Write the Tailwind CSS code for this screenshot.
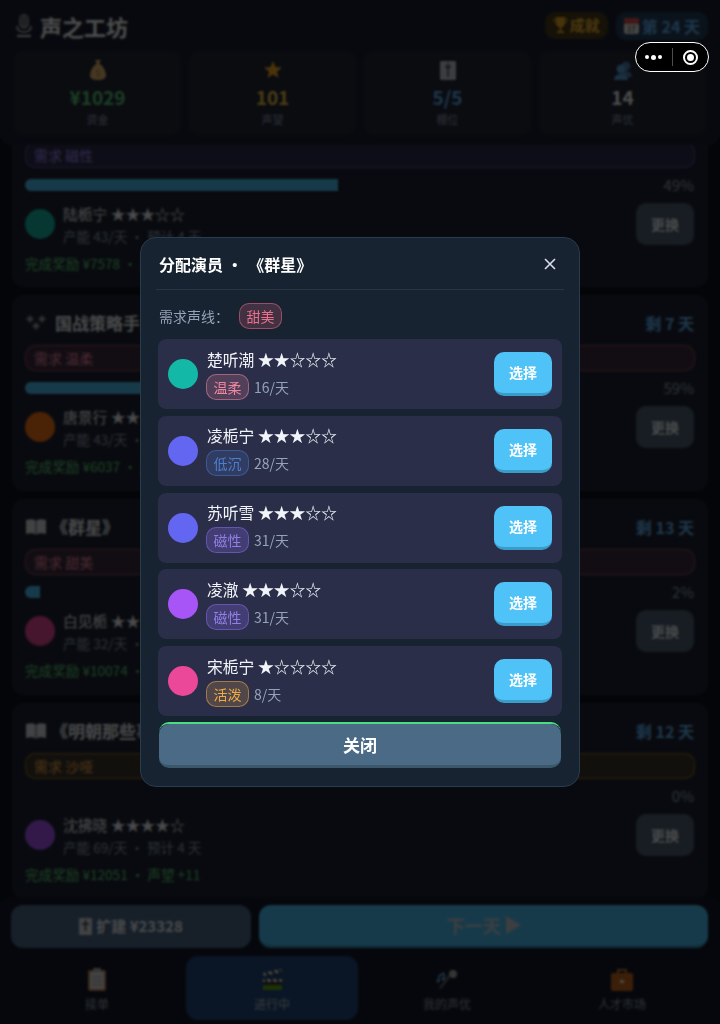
<!DOCTYPE html>
<html lang="zh-CN">
<head>
<meta charset="UTF-8">
<title>声之工坊</title>
<script src="https://cdn.jsdelivr.net/npm/@tailwindcss/browser@4"></script>
</head>
<body class="bg-[#0d1220] font-['Noto_Sans_CJK_SC','Noto_Sans',sans-serif] text-[#f1f5f9]">
<div class="relative w-[720px] h-[1024px] overflow-hidden flex flex-col">

  <!-- Header -->
  <header class="relative z-10 h-[145px] shrink-0 bg-[#1c2132] rounded-b-[12px] px-[14px]">
    <div class="flex items-center justify-between h-[51px]">
      <div class="flex items-center gap-[7px] ml-[1px]">
        <svg width="18" height="24" viewBox="0 0 18 24"><rect x="4" y="0" width="10" height="15" rx="5" fill="#8a8e94"/><path d="M5 4h8M5 7h8M5 10h8M7 1v12M11 1v12" stroke="#50545a" stroke-width="1"/><path d="M2 12c0 4 3 6 7 6s7-2 7-6" fill="none" stroke="#c8ccd0" stroke-width="1.500"/><rect x="2" y="21" width="14" height="2" fill="#c8ccd0"/></svg>
        <span class="text-[22px] font-bold leading-none text-white">声之工坊</span>
      </div>
      <div class="flex items-center gap-2 -mr-[2px]">
        <div class="flex items-center gap-[2px] h-[27px] px-2 rounded-[10px] bg-[#4a3c1c] text-[#f5b82e] text-[15px] font-bold">
          <svg width="15" height="17" viewBox="0 0 15 17"><path d="M3 0h9v6a4.500 4.500 0 0 1-9 0zM6.500 10h2v4h-2zM4 14h7v2H4z" fill="#f0a820"/><path d="M3 2H1c0 3 1 4 3 5M12 2h2c0 3-1 4-3 5" fill="none" stroke="#f0a820"/></svg>
          成就
        </div>
        <div class="flex items-center gap-[3px] h-[28px] px-2 rounded-[10px] bg-[#24405c] text-[#64b5f6] text-[16px] font-bold">
          <svg width="15" height="18" viewBox="0 0 15 18"><rect y="1" width="15" height="16" rx="2" fill="#e8e8e8"/><path d="M0 3a2 2 0 0 1 2-2h11a2 2 0 0 1 2 2v4H0z" fill="#e05050"/><text x="7.500" y="15" font-size="7" text-anchor="middle" fill="#555">17</text></svg>
          第 24 天
        </div>
      </div>
    </div>
    <div class="grid grid-cols-4 gap-2">
      <div class="h-[84px] rounded-[10px] bg-[#222838] flex flex-col items-center pt-[8px]">
        <svg width="18" height="22" viewBox="0 0 18 22"><path d="M6 1h6l-2 4h-2zM7 5h4c4 3 6 8 6 11 0 4-3 5-8 5s-8-1-8-5c0-3 2-8 6-11z" fill="#e8b870"/><text x="9" y="17" font-size="8" text-anchor="middle" fill="#8a6428">$</text></svg>
        <span class="text-[19px] font-bold leading-[26px] mt-[3px] text-[#5fd07a]">¥1029</span>
        <span class="text-[11px] leading-[16px] mt-[1px] text-[#94a3b8]">资金</span>
      </div>
      <div class="h-[84px] rounded-[10px] bg-[#222838] flex flex-col items-center pt-[8px]">
        <svg width="18" height="22" viewBox="0 0 18 22"><path d="M9 2l2.500 6 6.500.500-5 4.200 1.600 6.300L9 15.500 3.400 19 5 12.700 0 8.500 6.500 8z" fill="#f9a825"/></svg>
        <span class="text-[19px] font-bold leading-[26px] mt-[3px] text-[#fbc942]">101</span>
        <span class="text-[11px] leading-[16px] mt-[1px] text-[#94a3b8]">声望</span>
      </div>
      <div class="h-[84px] rounded-[10px] bg-[#222838] flex flex-col items-center pt-[10px]">
        <svg width="16" height="19" viewBox="0 0 16 19"><rect width="16" height="19" rx="1" fill="#c8ced6"/><path d="M8 2v14M5 6h6" stroke="#3a4048" stroke-width="1.500"/></svg>
        <span class="text-[19px] font-bold leading-[26px] mt-[4px] text-[#64b5f6]">5/5</span>
        <span class="text-[11px] leading-[16px] mt-[1px] text-[#94a3b8]">棚位</span>
      </div>
      <div class="h-[84px] rounded-[10px] bg-[#222838] flex flex-col items-center pt-[8px]">
        <svg width="20" height="22" viewBox="0 0 20 22"><circle cx="13" cy="7" r="4.500" fill="#4a80b0"/><path d="M9 18c0-4 1-6 4-6s6 2 6 6z" fill="#4a80b0"/><circle cx="8" cy="10" r="4.500" fill="#5aa0dc"/><path d="M1 21c0-4 3-6 7-6s7 2 7 6z" fill="#5aa0dc"/></svg>
        <span class="text-[19px] font-bold leading-[26px] mt-[3px] text-white">14</span>
        <span class="text-[11px] leading-[16px] mt-[1px] text-[#94a3b8]">声优</span>
      </div>
    </div>
  </header>

  <!-- Project list, scrolled so that the first card sits under the header -->
  <main class="flex-1 -mt-[54px] px-3 flex flex-col gap-2 overflow-hidden">
    <!-- card 1 -->
    <section class="h-[196px] shrink-0 rounded-[12px] bg-[#1e2432] pl-[13px] pr-[14px] pt-[51px]">
      <div class="h-[26px] -mr-px rounded-[10px] border border-[#8b6cf0]/50 bg-[#8b6cf0]/15 px-2 text-[14px] leading-[24px] text-[#a78bfa]">需求 磁性</div>
      <div class="flex items-center mt-[10px] h-[14px]">
        <div class="w-[639px] h-[12px]"><div class="h-full rounded-l-full bg-[#4fc3f7]" style="width:49%"></div></div>
        <span class="ml-auto text-[15px] mt-[1px] text-[#94a3b8]">49%</span>
      </div>
      <div class="flex items-center mt-[11px] h-[42px]">
        <div class="w-[30px] h-[30px] rounded-full bg-[#14b8a6]"></div>
        <div class="ml-2 flex-1 pt-[2px]">
          <div class="text-[14.800px] leading-[22px]">陆栀宁 ★★★☆☆</div>
          <div class="text-[13.600px] leading-[22px] text-[#94a3b8]">产能 43/天 · 预计 4 天</div>
        </div>
        <button class="w-[58px] h-[42px] rounded-[10px] bg-[#4d6275] text-[14px] font-bold">更换</button>
      </div>
      <div class="text-[13.600px] leading-[18px] mt-[9px] text-[#5fd07a]">完成奖励 ¥7578 · 声望 +7</div>
    </section>
    <!-- card 2 -->
    <section class="h-[196px] shrink-0 rounded-[12px] bg-[#1e2432] pl-[13px] pr-[14px] pt-[16px]">
      <div class="flex items-center justify-between h-[26px] -mt-px mb-px">
        <div class="flex items-center gap-[8px] text-[17px] font-bold">
          <svg width="22" height="20" viewBox="0 0 22 20"><g fill="#77797e"><rect x="2" y="3" width="6" height="6" transform="rotate(45 5 6)"/><rect x="14" y="3" width="6" height="6" transform="rotate(45 17 6)"/><rect x="8" y="10" width="6" height="6" transform="rotate(45 11 13)"/></g><g fill="#e8eaee"><circle cx="5" cy="6" r="1"/><circle cx="17" cy="6" r="1"/><circle cx="11" cy="13" r="1"/></g></svg>
          国战策略手游配音
        </div>
        <span class="text-[16px] font-bold text-[#64b5f6]">剩 7 天</span>
      </div>
      <div class="mt-[9px] h-[26px] -mr-px rounded-[10px] border border-[#f06a8a]/50 bg-[#f06a8a]/15 px-2 text-[14px] leading-[24px] text-[#f48aa4]">需求 温柔</div>
      <div class="flex items-center mt-[10px] h-[14px]">
        <div class="w-[639px] h-[12px]"><div class="h-full rounded-l-full bg-[#4fc3f7]" style="width:59%"></div></div>
        <span class="ml-auto text-[15px] mt-[1px] text-[#94a3b8]">59%</span>
      </div>
      <div class="flex items-center mt-[11px] h-[42px]">
        <div class="w-[30px] h-[30px] rounded-full bg-[#f97316]"></div>
        <div class="ml-2 flex-1 pt-[2px]">
          <div class="text-[14.800px] leading-[22px]">唐景行 ★★★☆☆</div>
          <div class="text-[13.600px] leading-[22px] text-[#94a3b8]">产能 43/天 · 预计 3 天</div>
        </div>
        <button class="w-[58px] h-[42px] rounded-[10px] bg-[#4d6275] text-[14px] font-bold">更换</button>
      </div>
      <div class="text-[13.600px] leading-[18px] mt-[9px] text-[#5fd07a]">完成奖励 ¥6037 · 声望 +6</div>
    </section>
    <!-- card 3 -->
    <section class="h-[196px] shrink-0 rounded-[12px] bg-[#1e2432] pl-[13px] pr-[14px] pt-[16px]">
      <div class="flex items-center justify-between h-[26px] -mt-px mb-px">
        <div class="flex items-center gap-[4px] text-[17px] font-bold">
          <svg width="22" height="18" viewBox="0 0 22 18"><path d="M1 2c4-1 8-1 10 1 2-2 6-2 10-1v14c-4-1-8-1-10 1-2-2-6-2-10-1z" fill="#d8dce2"/><path d="M11 3v14" stroke="#555"/></svg>
          《群星》
        </div>
        <span class="text-[16px] font-bold text-[#64b5f6]">剩 13 天</span>
      </div>
      <div class="mt-[9px] h-[26px] -mr-px rounded-[10px] border border-[#f06a8a]/50 bg-[#f06a8a]/15 px-2 text-[14px] leading-[24px] text-[#f48aa4]">需求 甜美</div>
      <div class="flex items-center mt-[10px] h-[14px]">
        <div class="w-[639px] h-[12px]"><div class="h-full w-[15px] rounded-l-full bg-[#4fc3f7]"></div></div>
        <span class="ml-auto text-[15px] mt-[1px] text-[#94a3b8]">2%</span>
      </div>
      <div class="flex items-center mt-[11px] h-[42px]">
        <div class="w-[30px] h-[30px] rounded-full bg-[#ec4899]"></div>
        <div class="ml-2 flex-1 pt-[2px]">
          <div class="text-[14.800px] leading-[22px]">白见栀 ★★★☆☆</div>
          <div class="text-[13.600px] leading-[22px] text-[#94a3b8]">产能 32/天 · 预计 13 天</div>
        </div>
        <button class="w-[58px] h-[42px] rounded-[10px] bg-[#4d6275] text-[14px] font-bold">更换</button>
      </div>
      <div class="text-[13.600px] leading-[18px] mt-[9px] text-[#5fd07a]">完成奖励 ¥10074 · 声望 +10</div>
    </section>
    <!-- card 4 -->
    <section class="h-[196px] shrink-0 rounded-[12px] bg-[#1e2432] pl-[13px] pr-[14px] pt-[16px]">
      <div class="flex items-center justify-between h-[26px] -mt-px mb-px">
        <div class="flex items-center gap-[4px] text-[17px] font-bold">
          <svg width="22" height="18" viewBox="0 0 22 18"><path d="M1 2c4-1 8-1 10 1 2-2 6-2 10-1v14c-4-1-8-1-10 1-2-2-6-2-10-1z" fill="#d8dce2"/><path d="M11 3v14" stroke="#555"/></svg>
          《明朝那些事儿》
        </div>
        <span class="text-[16px] font-bold text-[#64b5f6]">剩 12 天</span>
      </div>
      <div class="mt-[9px] h-[26px] -mr-px rounded-[10px] border border-[#f59e0b]/50 bg-[#f59e0b]/15 px-2 text-[14px] leading-[24px] text-[#f5b04a]">需求 沙哑</div>
      <div class="flex items-center justify-end mt-[10px] h-[14px]">
        <span class="text-[15px] mt-[1px] text-[#94a3b8]">0%</span>
      </div>
      <div class="flex items-center mt-[11px] h-[42px]">
        <div class="w-[30px] h-[30px] rounded-full bg-[#a855f7]"></div>
        <div class="ml-2 flex-1 pt-[2px]">
          <div class="text-[14.800px] leading-[22px]">沈拂晓 ★★★★☆</div>
          <div class="text-[13.600px] leading-[22px] text-[#94a3b8]">产能 69/天 · 预计 4 天</div>
        </div>
        <button class="w-[58px] h-[42px] rounded-[10px] bg-[#4d6275] text-[14px] font-bold">更换</button>
      </div>
      <div class="text-[13.600px] leading-[18px] mt-[9px] text-[#5fd07a]">完成奖励 ¥12051 · 声望 +11</div>
    </section>
  </main>

  <!-- Bottom bar -->
  <footer class="h-[127px] shrink-0 bg-[#151a29] rounded-t-[12px] relative z-10">
    <div class="flex gap-2 pl-[11px] pr-3 pt-2">
      <button class="w-[240px] h-[43px] rounded-[12px] bg-[#4d6a8a] flex items-center justify-center gap-1 text-[15px] font-bold">
        <svg width="13" height="17" viewBox="0 0 13 17"><rect width="13" height="17" rx="1" fill="#d8dce2"/><path d="M6.500 2v11M3 6h7" stroke="#3a4048" stroke-width="1.500"/></svg>
        扩建 ¥23328
      </button>
      <button class="flex-1 h-[43px] rounded-[12px] bg-[#4fc3f7] border-b-[3px] border-[#3a9cc8] flex items-center justify-center gap-1 text-[18px] font-bold text-[#c8d0d8]">下一天
        <svg width="16" height="18" viewBox="0 0 16 18"><path d="M1 0l15 9-15 9z" fill="#c8d0d8"/></svg>
      </button>
    </div>
    <nav class="grid grid-cols-4 gap-[3px] pl-[11px] pr-3 mt-2">
      <div class="h-[64px] rounded-[12px] flex flex-col items-center pt-[12px] text-[#94a3b8]">
        <svg width="20" height="23" viewBox="0 0 20 23"><rect x="1" y="2" width="18" height="21" rx="2" fill="#c08858"/><rect x="3" y="4" width="14" height="17" fill="#e0e0e0"/><rect x="6" y="0" width="8" height="4" rx="1" fill="#b0b0b0"/><path d="M5 9h10M5 13h10M5 17h10" stroke="#999"/></svg>
        <span class="text-[12px] leading-[18px] mt-[4px]">接单</span>
      </div>
      <div class="h-[64px] rounded-[12px] bg-[#224a7e] flex flex-col items-center pt-[12px] text-[#b8c2cc]">
        <svg width="24" height="23" viewBox="0 0 24 23"><path d="M3 11h19v3H3z" fill="#eee"/><path d="M3 5l18-4 1 3-18 4z" fill="#eee"/><path d="M6 4.500l3 3M12 3l3 3M18 2l3 2.500M5 11l2 3M11 11l2 3M17 11l2 3" stroke="#222" stroke-width="2"/><path d="M3 14h19v3H3z" fill="#333"/><path d="M3 17h19v5H3z" fill="#5ea818"/></svg>
        <span class="text-[12px] leading-[18px] mt-[4px]">进行中</span>
      </div>
      <div class="h-[64px] rounded-[12px] flex flex-col items-center pt-[12px] text-[#94a3b8]">
        <svg width="24" height="23" viewBox="0 0 24 23"><circle cx="18" cy="6" r="4" fill="#b0b0b0"/><path d="M15 9L6 21l-2-1 9-13z" fill="#666"/><path d="M4 8v5M9 5v6M4 8l5-3" stroke="#70b8f0" stroke-width="1.500" fill="none"/><circle cx="3" cy="13" r="1.500" fill="#70b8f0"/><circle cx="8" cy="11" r="1.500" fill="#70b8f0"/></svg>
        <span class="text-[12px] leading-[18px] mt-[4px]">我的声优</span>
      </div>
      <div class="h-[64px] rounded-[12px] flex flex-col items-center pt-[12px] text-[#94a3b8]">
        <svg width="24" height="23" viewBox="0 0 24 23"><path d="M8 5V2h8v3" fill="none" stroke="#c87830" stroke-width="2"/><rect x="1" y="5" width="22" height="18" rx="2" fill="#c8681c"/><rect x="10" y="12" width="4" height="3" fill="#eee"/></svg>
        <span class="text-[12px] leading-[18px] mt-[4px]">人才市场</span>
      </div>
    </nav>
  </footer>

  <!-- Overlay -->
  <div class="absolute inset-0 z-20 bg-black/70 backdrop-blur-[1px]"></div>

  <!-- Modal -->
  <div class="absolute z-30 left-[140px] top-[237px] w-[440px] h-[550px] rounded-[16px] bg-[#172330] border border-[#2a3b4b] px-[15px] overflow-hidden">
    <div class="flex items-center justify-between h-[52px] border-b border-[#273644] px-[3px]">
      <span class="text-[16px] font-bold text-white">分配演员 • <span class="ml-[2px]">《群星》</span></span>
      <svg class="mr-[5px]" width="12" height="12" viewBox="0 0 12 12"><path d="M1 1l10 10M11 1L1 11" stroke="#d8e0e8" stroke-width="1.600"/></svg>
    </div>
    <div class="flex items-center h-[26px] mt-[13px] px-[3px]">
      <span class="text-[14px] text-[#94a3b8]">需求声线：</span>
      <span class="ml-[10px] w-[43px] h-[26px] rounded-[10px] border border-[#f06a8a]/50 bg-[#f06a8a]/20 text-center text-[14px] leading-[24px] text-[#e96f8a]">甜美</span>
    </div>
    <div class="mt-[10px] mx-[2px] flex flex-col gap-[6.750px]">
      <div class="h-[70px] rounded-[8px] bg-[#2a2e48] flex items-center pl-[10px] pr-[10px]">
        <div class="w-[30px] h-[30px] rounded-full bg-[#14b8a6]"></div>
        <div class="ml-[9px] flex-1">
          <div class="text-[15.800px] leading-[22px] text-[#f1f5f9]">楚听潮 ★★☆☆☆</div>
          <div class="flex items-center mt-[3px] -ml-px">
            <span class="w-[43px] h-[26px] rounded-[10px] border border-[#f48aa4]/50 bg-[#f48aa4]/20 text-center text-[14px] leading-[24px] text-[#ef86a0]">温柔</span>
            <span class="ml-[5px] text-[14px] mt-[1px] text-[#94a3b8]">16/天</span>
          </div>
        </div>
        <button class="w-[58px] h-[44px] rounded-[10px] bg-[#4fc3f7] border-b-[3px] border-[#3a9cc8] text-[14px] font-bold text-white">选择</button>
      </div>
      <div class="h-[70px] rounded-[8px] bg-[#2a2e48] flex items-center pl-[10px] pr-[10px]">
        <div class="w-[30px] h-[30px] rounded-full bg-[#6366f1]"></div>
        <div class="ml-[9px] flex-1">
          <div class="text-[15.800px] leading-[22px] text-[#f1f5f9]">凌栀宁 ★★★☆☆</div>
          <div class="flex items-center mt-[3px] -ml-px">
            <span class="w-[43px] h-[26px] rounded-[10px] border border-[#4a78c8]/50 bg-[#4a78c8]/20 text-center text-[14px] leading-[24px] text-[#4f7fd0]">低沉</span>
            <span class="ml-[5px] text-[14px] mt-[1px] text-[#94a3b8]">28/天</span>
          </div>
        </div>
        <button class="w-[58px] h-[44px] rounded-[10px] bg-[#4fc3f7] border-b-[3px] border-[#3a9cc8] text-[14px] font-bold text-white">选择</button>
      </div>
      <div class="h-[70px] rounded-[8px] bg-[#2a2e48] flex items-center pl-[10px] pr-[10px]">
        <div class="w-[30px] h-[30px] rounded-full bg-[#6366f1]"></div>
        <div class="ml-[9px] flex-1">
          <div class="text-[15.800px] leading-[22px] text-[#f1f5f9]">苏听雪 ★★★☆☆</div>
          <div class="flex items-center mt-[3px] -ml-px">
            <span class="w-[43px] h-[26px] rounded-[10px] border border-[#8b6cf0]/50 bg-[#8b6cf0]/25 text-center text-[14px] leading-[24px] text-[#917fe4]">磁性</span>
            <span class="ml-[5px] text-[14px] mt-[1px] text-[#94a3b8]">31/天</span>
          </div>
        </div>
        <button class="w-[58px] h-[44px] rounded-[10px] bg-[#4fc3f7] border-b-[3px] border-[#3a9cc8] text-[14px] font-bold text-white">选择</button>
      </div>
      <div class="h-[70px] rounded-[8px] bg-[#2a2e48] flex items-center pl-[10px] pr-[10px]">
        <div class="w-[30px] h-[30px] rounded-full bg-[#a855f7]"></div>
        <div class="ml-[9px] flex-1">
          <div class="text-[15.800px] leading-[22px] text-[#f1f5f9]">凌澈 ★★★☆☆</div>
          <div class="flex items-center mt-[3px] -ml-px">
            <span class="w-[43px] h-[26px] rounded-[10px] border border-[#8b6cf0]/50 bg-[#8b6cf0]/25 text-center text-[14px] leading-[24px] text-[#917fe4]">磁性</span>
            <span class="ml-[5px] text-[14px] mt-[1px] text-[#94a3b8]">31/天</span>
          </div>
        </div>
        <button class="w-[58px] h-[44px] rounded-[10px] bg-[#4fc3f7] border-b-[3px] border-[#3a9cc8] text-[14px] font-bold text-white">选择</button>
      </div>
      <div class="h-[70px] rounded-[8px] bg-[#2a2e48] flex items-center pl-[10px] pr-[10px]">
        <div class="w-[30px] h-[30px] rounded-full bg-[#ec4899]"></div>
        <div class="ml-[9px] flex-1">
          <div class="text-[15.800px] leading-[22px] text-[#f1f5f9]">宋栀宁 ★☆☆☆☆</div>
          <div class="flex items-center mt-[3px] -ml-px">
            <span class="w-[43px] h-[26px] rounded-[10px] border border-[#f5b04a]/50 bg-[#f5b04a]/20 text-center text-[14px] leading-[24px] text-[#eeab48]">活泼</span>
            <span class="ml-[5px] text-[14px] mt-[1px] text-[#94a3b8]">8/天</span>
          </div>
        </div>
        <button class="w-[58px] h-[44px] rounded-[10px] bg-[#4fc3f7] border-b-[3px] border-[#3a9cc8] text-[14px] font-bold text-white">选择</button>
      </div>
    </div>
    <div class="mt-[6px] mx-[3px] h-[46px] rounded-t-[10px] border-t-2 border-[#4ade80]">
      <button class="w-full h-[44px] rounded-[10px] bg-[#4a6a85] border-b-[3px] border-[#3c566c] text-[17px] font-bold text-white">关闭</button>
    </div>
  </div>

  <!-- WeChat capsule -->
  <div class="absolute z-40 left-[635px] top-[42px] w-[74px] h-[30px] rounded-full bg-black border border-white flex items-center">
    <div class="flex-1 flex items-center justify-center gap-[2px]">
      <span class="w-[4px] h-[4px] rounded-full bg-white"></span>
      <span class="w-[5px] h-[5px] rounded-full bg-white"></span>
      <span class="w-[4px] h-[4px] rounded-full bg-white"></span>
    </div>
    <div class="w-px h-[18px] bg-white/30"></div>
    <div class="flex-1 flex items-center justify-center">
      <span class="w-[15px] h-[15px] rounded-full border-2 border-white flex items-center justify-center"><span class="w-[7px] h-[7px] rounded-full bg-white"></span></span>
    </div>
  </div>
</div>
</body>
</html>
